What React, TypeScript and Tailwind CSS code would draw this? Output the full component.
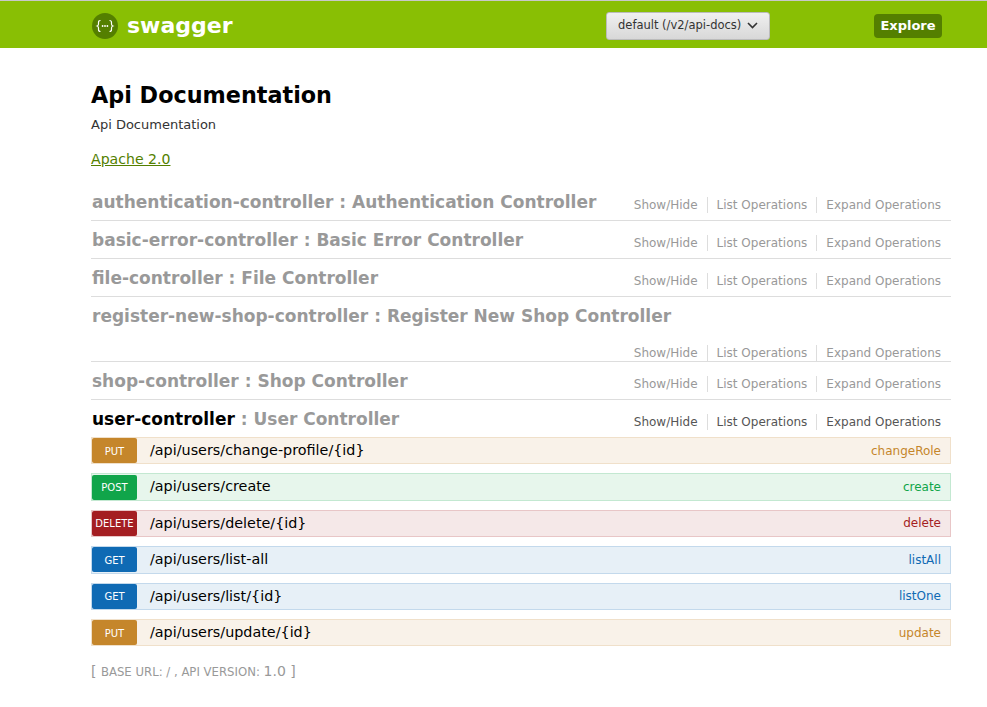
const SECTIONS = [
  { name: 'authentication-controller', title: 'Authentication Controller' },
  { name: 'basic-error-controller', title: 'Basic Error Controller' },
  { name: 'file-controller', title: 'File Controller' },
  { name: 'register-new-shop-controller', title: 'Register New Shop Controller', wrap: true },
  { name: 'shop-controller', title: 'Shop Controller' },
];

const METHODS = {
  PUT: { badge: 'bg-[#c5862b]', row: 'bg-[#f9f2e9] border-[#f0e0ca]', text: 'text-[#c5862b]' },
  POST: { badge: 'bg-[#10a54a]', row: 'bg-[#e7f6ec] border-[#c3e8d1]', text: 'text-[#10a54a]' },
  DELETE: { badge: 'bg-[#a41e22]', row: 'bg-[#f5e8e8] border-[#e8c6c7]', text: 'text-[#a41e22]' },
  GET: { badge: 'bg-[#0f6ab4]', row: 'bg-[#e7f0f7] border-[#c3d9ec]', text: 'text-[#0f6ab4]' },
};

const OPERATIONS: { method: keyof typeof METHODS; path: string; nickname: string }[] = [
  { method: 'PUT', path: '/api/users/change-profile/{id}', nickname: 'changeRole' },
  { method: 'POST', path: '/api/users/create', nickname: 'create' },
  { method: 'DELETE', path: '/api/users/delete/{id}', nickname: 'delete' },
  { method: 'GET', path: '/api/users/list-all', nickname: 'listAll' },
  { method: 'GET', path: '/api/users/list/{id}', nickname: 'listOne' },
  { method: 'PUT', path: '/api/users/update/{id}', nickname: 'update' },
];

function Links({ active }: { active?: boolean }) {
  const color = active ? 'text-[#555]' : 'text-[#999]';
  return (
    <ul className={`flex items-center whitespace-nowrap text-[12px] leading-[16px] ${color}`}>
      <li className="pr-[9px] border-r border-[#ddd]">Show/Hide</li>
      <li className="px-[9px] border-r border-[#ddd]">List Operations</li>
      <li className="pl-[9px] pr-[10px]">Expand Operations</li>
    </ul>
  );
}

function Heading({ name, title, active, wrap }: { name: string; title: string; active?: boolean; wrap?: boolean }) {
  return (
    <div
      className={`${active ? 'h-[37px]' : 'border-b border-[#ddd]'} ${
        wrap ? 'h-[65px] flex flex-col justify-between' : `${active ? '' : 'h-[38px]'} flex items-start justify-between`
      }`}
    >
      <h2 className="pl-px pt-[6.6px] text-[17px] leading-[24px] font-bold text-[#999] whitespace-nowrap">
        <span className={active ? 'text-black' : ''}>{name}</span> : {title}
      </h2>
      <div className={`flex justify-end ${wrap ? '' : 'pt-[13.6px]'}`}>
        <Links active={active} />
      </div>
    </div>
  );
}

export default function App() {
  return (
    <div className="min-h-[707px] bg-white font-['DejaVu_Sans',sans-serif] text-black">
      <header className="h-[48px] bg-[#89bf04] border-t border-[#c8c8c8] pt-[2px] flex items-center pl-[92px] pr-[45px]">
        <div className="flex items-center gap-[9px]">
          <svg width="26" height="26" viewBox="0 0 26 26" aria-hidden="true">
            <circle cx="13" cy="13" r="13" fill="#547f00" />
            <path
              d="M8.5 7.5c-1.5 0-2 .7-2 2v1.5c0 1-.5 1.7-1.3 2 .8.3 1.3 1 1.3 2v1.5c0 1.3.5 2 2 2M17.5 7.5c1.5 0 2 .7 2 2v1.5c0 1 .5 1.7 1.3 2-.8.3-1.3 1-1.3 2v1.5c0 1.3-.5 2-2 2"
              fill="none"
              stroke="#fff"
              strokeWidth="1.2"
            />
            <circle cx="10.6" cy="13" r=".9" fill="#fff" />
            <circle cx="13" cy="13" r=".9" fill="#fff" />
            <circle cx="15.4" cy="13" r=".9" fill="#fff" />
          </svg>
          <span className="text-[22px] leading-none font-bold text-white">swagger</span>
        </div>
        <div className="ml-auto shrink-0 w-[164px] h-[28px] rounded-[3px] border border-[#bbb] bg-gradient-to-b from-[#f0f0f0] to-[#d8d8d8] flex items-center pl-[11px] gap-[6px] text-[11.5px] text-[#333] whitespace-nowrap">
          <span>default (/v2/api-docs)</span>
          <svg width="11" height="7" viewBox="0 0 11 7" fill="none" stroke="#333" strokeWidth="1.6" aria-hidden="true">
            <path d="M1 1l4.5 4.5L10 1" />
          </svg>
        </div>
        <div className="ml-[104px] shrink-0 w-[68px] h-[24px] rounded-[4px] bg-[#547f00] flex items-center justify-center text-[13px] font-bold text-white">
          Explore
        </div>
      </header>

      <main className="pl-[91px] pr-[36px]">
        <h1 className="mt-[33px] text-[22.3px] leading-[28px] font-bold">Api Documentation</h1>
        <p className="mt-[7px] text-[13px] leading-[18px] text-[#333]">Api Documentation</p>
        <a className="block mt-[16px] text-[14.1px] leading-[18px] text-[#547f00] underline">Apache 2.0</a>

        <div className="mt-[15px]">
          {SECTIONS.map((s) => (
            <Heading key={s.name} name={s.name} title={s.title} wrap={s.wrap} />
          ))}
          <Heading name="user-controller" title="User Controller" active />
        </div>

        <div>
          {OPERATIONS.map((op) => {
            const m = METHODS[op.method];
            return (
              <div key={op.path} className={`mb-[9px] h-[27.4px] border flex items-center pr-[9px] ${m.row}`}>
                <span className={`w-[45px] h-[25px] pt-px rounded-[2px] flex items-center justify-center text-[10px] text-white ${m.badge}`}>
                  {op.method}
                </span>
                <span className="ml-[13px] flex-1 text-[14.35px]">{op.path}</span>
                <span className={`text-[12px] ${m.text}`}>{op.nickname}</span>
              </div>
            );
          })}
        </div>

        <div className="mt-[16px] text-[14px] leading-[18px] text-[#999]">
          [ <span className="text-[11.7px] uppercase">base url: / , api version: </span>1.0 ]
        </div>
      </main>
    </div>
  );
}
